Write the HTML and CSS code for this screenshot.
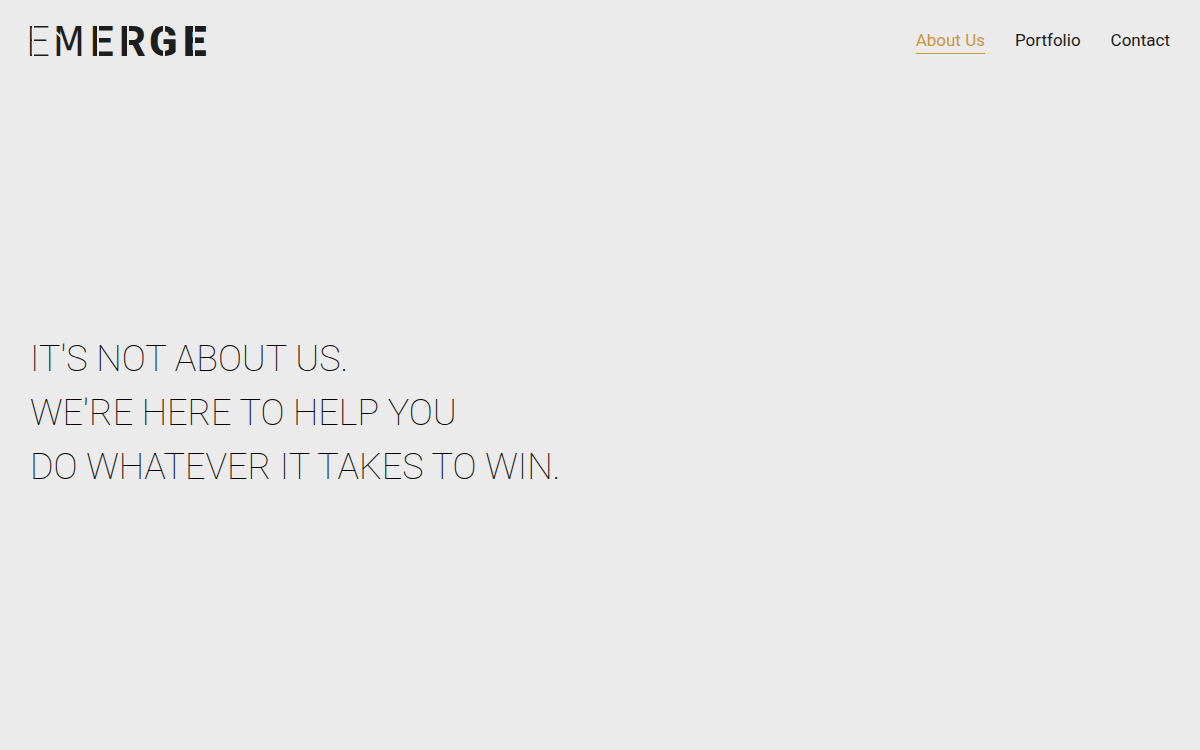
FILE: index.html
```
<!DOCTYPE html>
<html lang="en">
<head>
    <meta charset="UTF-8">
    <meta name="viewport" content="width=device-width, initial-scale=1.0">
    <title>Emerge | About Us</title>
    <link rel="stylesheet" href="styles.css">
</head>
<body>
    <header class="site-header">
        <a class="logo" href="#" aria-label="Emerge home">
            <svg width="190" height="56" viewBox="-6 -12 190 56">
                <g class="logo-letters">
                    <text x="-4" y="31" font-weight="200">E</text>
                    <text class="logo-m" x="23" y="31">M</text>
                    <text x="60" y="31" font-weight="600">E</text>
                    <text x="89" y="31" font-weight="700">R</text>
                    <text x="119" y="31" font-weight="800">G</text>
                    <text x="153" y="31" font-weight="900">E</text>
                </g>
                <!-- stencil cuts -->
                <path class="logo-cuts" d="M3 0V32M26 7L32 13M68 0V32M98 0V32M134 0V12M134 22V32M164 0V32"/>
            </svg>
        </a>
        <nav class="main-nav">
            <a class="active" href="#">About Us</a>
            <a href="#">Portfolio</a>
            <a href="#">Contact</a>
        </nav>
    </header>

    <main class="hero">
        <h1>It's not about us.<br>We're here to help you<br>do whatever it takes to win.</h1>
    </main>
</body>
</html>
```
FILE: styles.css
```
* {
    box-sizing: border-box;
}
body {
    margin: 0;
    min-height: 100vh;
    display: flex;
    flex-direction: column;
    font-family: Roboto, Arial, sans-serif;
    background-color: #ebebeb;
    color: #1d1d1d;
}
.site-header {
    display: flex;
    justify-content: space-between;
    align-items: flex-start;
    padding: 13px 30px 0 24px;
}
.logo svg {
    display: block;
}
.logo-letters {
    font-family: Roboto, Arial, sans-serif;
    font-size: 42px;
    fill: #1d1d1d;
}
.logo-m {
    font-family: "DejaVu Sans Condensed", Roboto, sans-serif;
    font-size: 41px;
}
.logo-cuts {
    stroke: #ebebeb;
    stroke-width: 2;
    fill: none;
}
.main-nav {
    display: flex;
    gap: 30px;
    padding-top: 15px;
}
.main-nav a {
    font-size: 17px;
    line-height: 25px;
    color: #1d1d1d;
    text-decoration: none;
    border-bottom: 1px solid transparent;
}
.main-nav a.active {
    color: #cc9544;
    border-bottom-color: #cc9544;
}
.hero {
    flex: 1;
    display: flex;
    align-items: center;
    padding: 6px 30px 0;
}
.hero h1 {
    margin: 0;
    font-size: 36px;
    font-weight: 100;
    line-height: 54px;
    color: #000;
    text-transform: uppercase;
}
```
